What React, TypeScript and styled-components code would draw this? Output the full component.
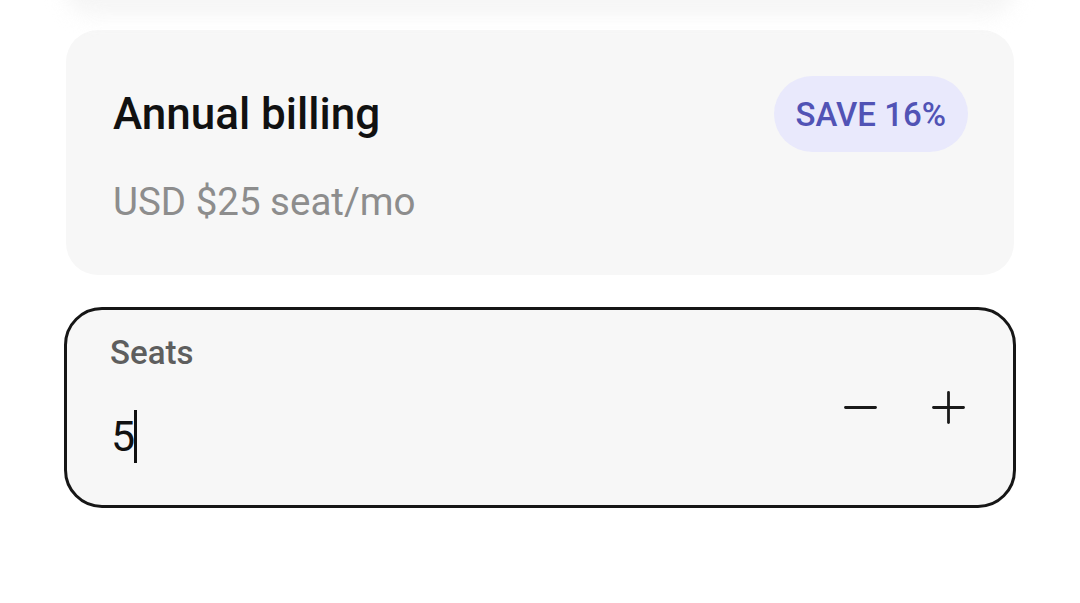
import React from 'react'
import styled, { createGlobalStyle } from 'styled-components'

const GlobalStyle = createGlobalStyle`
  html, body {
    margin: 0;
    padding: 0;
    background: #ffffff;
  }
  body {
    font-family: Roboto, 'Noto Sans', sans-serif;
    -webkit-font-smoothing: antialiased;
  }
`

const Page = styled.div`
  position: relative;
  width: 1080px;
  height: 603px;
  overflow: hidden;
  background: #ffffff;
`

// bottom of the plan card above, fading out under the scroll edge
const FadedCard = styled.div`
  position: absolute;
  top: -40px;
  left: 64px;
  width: 952px;
  height: 56px;
  border-radius: 32px;
  background: #f4f4f4;
  filter: blur(10px);
  opacity: 0.85;
`

const Content = styled.div`
  display: flex;
  flex-direction: column;
  gap: 32px;
  padding: 30px 64px 0;
`

const PlanCard = styled.div`
  box-sizing: border-box;
  height: 245px;
  margin: 0 2px;
  padding: 46px 47px 0 47px;
  border-radius: 32px;
  background: #f7f7f7;
  display: flex;
  flex-direction: column;
  gap: 28px;
`

const PlanHeader = styled.div`
  display: flex;
  align-items: center;
  justify-content: space-between;
  height: 76px;
`

const PlanTitle = styled.div`
  font-size: 44px;
  font-weight: 500;
  color: #111111;
  line-height: 52px;
`

const Badge = styled.div`
  box-sizing: border-box;
  height: 76px;
  padding: 0 22px;
  margin-right: -1px;
  border-radius: 38px;
  background: #e9e9fc;
  color: #5153b5;
  font-size: 33px;
  font-weight: 500;
  display: flex;
  align-items: center;
`

const PlanPrice = styled.div`
  font-size: 38.5px;
  font-weight: 400;
  color: #8d8d8d;
  line-height: 44px;
`

const SeatsField = styled.div`
  box-sizing: border-box;
  height: 201px;
  border: 3px solid #161616;
  border-radius: 38px;
  background: #f7f7f7;
  padding: 23px 48px 0 43px;
  display: flex;
  justify-content: space-between;
`

const FieldBody = styled.div`
  display: flex;
  flex-direction: column;
`

const FieldLabel = styled.div`
  font-size: 33px;
  font-weight: 500;
  color: #5e5e5e;
  line-height: 40px;
`

const FieldValue = styled.div`
  margin-top: 36px;
  display: flex;
  align-items: center;
  font-size: 43px;
  color: #111111;
  line-height: 54px;
  padding-left: 1px;
`

const Caret = styled.span`
  display: inline-block;
  width: 2.5px;
  height: 53px;
  margin-left: -1px;
  background: #111111;
`

const Stepper = styled.div`
  display: flex;
  align-items: center;
  gap: 55px;
  height: 33px;
  margin-top: 58px;
`

const StepButton = styled.button`
  width: 33px;
  height: 33px;
  padding: 0;
  border: none;
  background: transparent;
  color: #1a1a1a;
  display: flex;
  align-items: center;
  justify-content: center;
  cursor: pointer;
`

const StepIcon = ({ plus }: { plus?: boolean }) => (
  <svg width="33" height="33" viewBox="0 0 33 33" fill="none" stroke="currentColor" strokeWidth="2.8" strokeLinecap="round">
    <line x1="1.5" y1="16.5" x2="31.5" y2="16.5" />
    {plus && <line x1="16.5" y1="1.5" x2="16.5" y2="31.5" />}
  </svg>
)

export default function App() {
  return (
    <Page>
      <GlobalStyle />
      <FadedCard />
      <Content>
        <PlanCard>
          <PlanHeader>
            <PlanTitle>Annual billing</PlanTitle>
            <Badge>SAVE 16%</Badge>
          </PlanHeader>
          <PlanPrice>USD $25 seat/mo</PlanPrice>
        </PlanCard>
        <SeatsField>
          <FieldBody>
            <FieldLabel>Seats</FieldLabel>
            <FieldValue>
              5<Caret />
            </FieldValue>
          </FieldBody>
          <Stepper>
            <StepButton aria-label="Remove seat">
              <StepIcon />
            </StepButton>
            <StepButton aria-label="Add seat">
              <StepIcon plus />
            </StepButton>
          </Stepper>
        </SeatsField>
      </Content>
    </Page>
  )
}
